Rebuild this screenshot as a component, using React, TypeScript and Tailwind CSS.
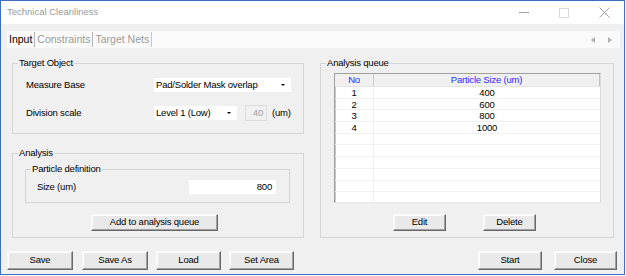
import React from "react";

const btn =
  "flex items-center justify-center bg-[#e9e9e9] border border-t-[#f8f8f8] border-l-[#f8f8f8] border-r-[#696969] border-b-[#696969] shadow-[inset_-1px_-1px_0_#a0a0a0,inset_1px_1px_0_#ffffff] text-black";

function Legend({ children }: { children: React.ReactNode }) {
  return (
    <div className="flex h-[12px] -mt-[7px] ml-[5px]">
      <span className="bg-[#f0f0f0] px-[1px] leading-[12px] text-black">{children}</span>
    </div>
  );
}

function Arrow() {
  return (
    <span className="inline-block w-0 h-0 border-l-[2px] border-r-[2px] border-t-[2px] border-l-transparent border-r-transparent border-t-black" />
  );
}

const rows = ["400", "600", "800", "1000", "", "", "", "", "", ""];

export default function App() {
  return (
    <div className="w-[626px] h-[276px] bg-white">
      <div className="w-[625px] h-[275px] border border-[#3d70c2] flex flex-col font-['Liberation_Sans',Arial,sans-serif] text-[9.5px] tracking-[-0.2px] text-black">
        {/* Title bar */}
        <div className="h-[23px] bg-white flex items-center">
          <span className="pl-[6px] text-[#9a9a9a] tracking-normal">Technical Cleanliness</span>
          <div className="ml-auto flex h-full">
            <div className="w-[40px] flex items-center justify-center">
              <div className="w-[10px] h-px bg-[#a6a6a6]" />
            </div>
            <div className="w-[40px] flex items-center justify-center">
              <div className="w-[10px] h-[10px] border border-[#dadada]" />
            </div>
            <div className="w-[40px] flex items-center justify-center">
              <svg width="11" height="11" viewBox="0 0 11 11">
                <path d="M0.5 0.5 L10.5 10.5 M10.5 0.5 L0.5 10.5" stroke="#a0a0a0" strokeWidth="1" fill="none" />
              </svg>
            </div>
          </div>
        </div>

        {/* Body */}
        <div className="flex-1 bg-[#f0f0f0] flex flex-col">
          {/* Tab strip */}
          <div className="mt-[7px] ml-[6px] mr-[4px] h-[17px] bg-[#fafafa] flex items-center text-[10.5px] tracking-normal">
            <span className="pl-[2px] pr-[2px]">Input</span>
            <div className="w-px h-[15px] bg-[#b5b5b5]" />
            <span className="px-[2px] text-[#9b9b9b]">Constraints</span>
            <div className="w-px h-[15px] bg-[#b5b5b5]" />
            <span className="px-[2px] text-[#9b9b9b]">Target Nets</span>
            <div className="w-px h-[15px] bg-[#c8c8c8]" />
            <div className="ml-auto flex items-center gap-[13px] mr-[8px]">
              <span className="inline-block w-0 h-0 border-t-[3px] border-b-[3px] border-r-[4px] border-t-transparent border-b-transparent border-r-[#b0b0b0]" />
              <span className="inline-block w-0 h-0 border-t-[3px] border-b-[3px] border-l-[4px] border-t-transparent border-b-transparent border-l-[#b0b0b0]" />
            </div>
          </div>

          {/* Group boxes */}
          <div className="flex mt-[15px]">
            {/* Left column */}
            <div className="ml-[11px] w-[292px] flex flex-col">
              {/* Target Object */}
              <div className="h-[71px] border border-[#d5d5d5] flex flex-col">
                <Legend>Target Object</Legend>
                <div className="flex items-center mt-[9px] h-[14px]">
                  <span className="pl-[13px] w-[141px]">Measure Base</span>
                  <div className="w-[137px] h-[14px] bg-white flex items-center pl-[2px]">
                    <span>Pad/Solder Mask overlap</span>
                    <span className="ml-auto mr-[6px] flex">
                      <Arrow />
                    </span>
                  </div>
                </div>
                <div className="flex items-center mt-[14px] h-[14px]">
                  <span className="pl-[13px] w-[141px]">Division scale</span>
                  <div className="w-[83px] h-[14px] bg-white flex items-center pl-[2px]">
                    <span>Level 1 (Low)</span>
                    <span className="ml-auto mr-[6px] flex">
                      <Arrow />
                    </span>
                  </div>
                  <div className="ml-[8px] w-[22px] h-[16px] border border-[#dcdcdc] flex items-center justify-end pr-[3px] text-[#a0a0a0]">
                    40
                  </div>
                  <span className="ml-[5px]">(um)</span>
                </div>
              </div>

              {/* Analysis */}
              <div className="mt-[19px] h-[85px] border border-[#d5d5d5] flex flex-col">
                <Legend>Analysis</Legend>
                <div className="mt-[10px] ml-[12px] mr-[13px] h-[34px] border border-[#d5d5d5] flex flex-col">
                  <Legend>Particle definition</Legend>
                  <div className="flex items-center mt-[5px] h-[14px]">
                    <span className="pl-[11px] w-[163px]">Size (um)</span>
                    <div className="w-[87px] h-[14px] bg-white flex items-center justify-end pr-[4px]">800</div>
                  </div>
                </div>
                <div className={`mt-[11px] ml-[78px] w-[127px] h-[17px] ${btn}`}>Add to analysis queue</div>
              </div>
            </div>

            {/* Right column: Analysis queue */}
            <div className="ml-[16px] w-[294px] h-[175px] border border-[#d5d5d5] flex flex-col">
              <Legend>Analysis queue</Legend>
              <div className="mt-[4px] ml-[13px] w-[267px] h-[130px] border-t border-l border-t-[#a0a0a0] border-l-[#a0a0a0] border-r border-b border-r-[#dcdcdc] border-b-[#e8e8e8] shadow-[inset_1px_0_0_#c8c8c8] bg-white overflow-hidden flex flex-col">
                <div className="h-[13px] shrink-0 flex bg-[#f0f0f0] border-b border-[#e4e4e4] text-[#2a2aff]">
                  <div className="w-[39px] border-r border-[#c8c8c8] flex items-center justify-center">No</div>
                  <div className="flex-1 flex items-center justify-center border-r border-[#c0c0c0]">Particle Size (um)</div>
                </div>
                {rows.map((v, i) => (
                  <div key={i} className="h-[11.7px] shrink-0 flex border-b border-[#f0f0f0] leading-[11px]">
                    <div className="w-[39px] border-r border-[#f0f0f0] flex items-center justify-center">
                      {v ? String(i + 1) : ""}
                    </div>
                    <div className="flex-1 flex items-center justify-center">{v}</div>
                  </div>
                ))}
              </div>
              <div className="flex mt-[11px]">
                <div className={`ml-[72px] w-[53px] h-[17px] ${btn}`}>Edit</div>
                <div className={`ml-[37px] w-[53px] h-[17px] ${btn}`}>Delete</div>
              </div>
            </div>
          </div>

          {/* Bottom buttons */}
          <div className="flex mt-[13px]">
            <div className={`ml-[6px] w-[66px] h-[19px] ${btn}`}>Save</div>
            <div className={`ml-[9px] w-[66px] h-[19px] ${btn}`}>Save As</div>
            <div className={`ml-[8px] w-[65px] h-[19px] ${btn}`}>Load</div>
            <div className={`ml-[8px] w-[65px] h-[19px] ${btn}`}>Set Area</div>
            <div className={`ml-[184px] w-[64px] h-[19px] ${btn}`}>Start</div>
            <div className={`ml-[12px] w-[63px] h-[19px] ${btn}`}>Close</div>
          </div>
        </div>
      </div>
    </div>
  );
}
